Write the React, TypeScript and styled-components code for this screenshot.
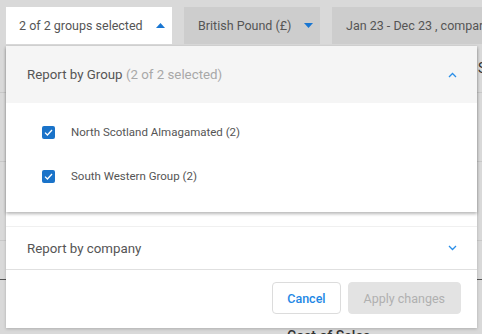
import { useState } from 'react'
import styled, { createGlobalStyle } from 'styled-components'

const GlobalStyle = createGlobalStyle`
  body {
    margin: 0;
    background: #d9d9d9;
    font-family: Roboto, 'Liberation Sans', sans-serif;
  }
  svg {
    flex-shrink: 0;
  }
`

const groups = [
  { id: 'nsa', name: 'North Scotland Almagamated (2)' },
  { id: 'swg', name: 'South Western Group (2)' },
]

const Caret = ({ up }: { up?: boolean }) => (
  <svg width='9' height='5' viewBox='0 0 9 5'>
    <path d={up ? 'M0 5 L4.5 0 L9 5 Z' : 'M0 0 L4.5 5 L9 0 Z'} fill='#1976d2' />
  </svg>
)

const Chevron = ({ up }: { up?: boolean }) => (
  <svg width='9' height='6' viewBox='0 0 9 6'>
    <path
      d={up ? 'M1 5 L4.5 1.5 L8 5' : 'M1 1 L4.5 4.5 L8 1'}
      fill='none'
      stroke='#2a8ee8'
      strokeWidth='1.3'
    />
  </svg>
)

const Check = () => (
  <svg width='9' height='7' viewBox='0 0 9 7'>
    <path d='M1 3.6 L3.4 6 L8 1' fill='none' stroke='#fff' strokeWidth='1.3' />
  </svg>
)

const App = () => {
  const [checked, setChecked] = useState<Record<string, boolean>>({ nsa: true, swg: true })

  return (
    <Page>
      <GlobalStyle />
      <Toolbar>
        <FilterTab $active $width={166}>
          2 of 2 groups selected
          <Caret up />
        </FilterTab>
        <FilterTab $width={136}>
          British Pound (£)
          <Caret />
        </FilterTab>
        <FilterTab $width={170}>Jan 23 - Dec 23 , compared to Jan 22 - Dec 22</FilterTab>
      </Toolbar>

      {/* table behind the dropdown */}
      <Table>
        <TableRow $height={46}>
          <Cell>Sales</Cell>
        </TableRow>
        <TableRow $height={68} />
        <TableRow $height={78} />
        <TableRow $height={38} $dark />
        <TableRow $height={64}>
          <Cell $bold>Cost of Sales</Cell>
        </TableRow>
      </Table>

      <Dropdown>
        <OpenCard>
          <CardHeader $shaded>
            <Title>
              Report by Group <Muted>(2 of 2 selected)</Muted>
            </Title>
            <Chevron up />
          </CardHeader>
          <List>
            {groups.map((g) => (
              <Item key={g.id} onClick={() => setChecked({ ...checked, [g.id]: !checked[g.id] })}>
                <Box $on={checked[g.id]}>{checked[g.id] && <Check />}</Box>
                {g.name}
              </Item>
            ))}
          </List>
        </OpenCard>

        <ClosedCard>
          <CardHeader>
            <Title>Report by company</Title>
            <Chevron />
          </CardHeader>
        </ClosedCard>

        <Footer>
          <Button>Cancel</Button>
          <Button $disabled>Apply changes</Button>
        </Footer>
      </Dropdown>
    </Page>
  )
}

export default App

const Page = styled.div`
  position: relative;
  width: 482px;
  height: 334px;
  overflow: hidden;
  background: #d9d9d9;
`

const Toolbar = styled.div`
  display: flex;
  gap: 12px;
  padding: 7px 0 0 6px;
  white-space: nowrap;
`

const FilterTab = styled.div<{ $active?: boolean; $width: number }>`
  flex: 0 0 ${(p) => p.$width}px;
  height: 37px;
  display: flex;
  align-items: center;
  gap: 13px;
  padding: 0 13px 0 ${(p) => (p.$active ? 13 : 14)}px;
  box-sizing: border-box;
  background: ${(p) => (p.$active ? '#ffffff' : '#cdcdcd')};
  color: #555;
  font-size: 12.5px;
  overflow: hidden;
`

const Table = styled.div`
  margin-top: 2px;
`

const TableRow = styled.div<{ $height: number; $dark?: boolean }>`
  height: ${(p) => p.$height}px;
  border-bottom: 1px solid ${(p) => (p.$dark ? '#555' : '#c8c8c8')};
  display: flex;
  align-items: flex-end;
`

const Cell = styled.div<{ $bold?: boolean }>`
  margin-left: ${(p) => (p.$bold ? 287 : 478)}px;
  font-size: 14px;
  font-weight: ${(p) => (p.$bold ? 500 : 400)};
  color: #333;
  padding-bottom: ${(p) => (p.$bold ? 0 : 16)}px;
  white-space: nowrap;
`

const Dropdown = styled.div`
  position: absolute;
  top: 46px;
  left: 6px;
  width: 471px;
  height: 282px;
  background: #fff;
  box-shadow: 0 1px 3px rgba(0, 0, 0, 0.2);
  display: flex;
  flex-direction: column;
`

const OpenCard = styled.div`
  background: #fff;
  box-shadow: 0 2px 3px rgba(0, 0, 0, 0.28);
  position: relative;
  z-index: 1;
`

const CardHeader = styled.div<{ $shaded?: boolean }>`
  height: ${(p) => (p.$shaded ? 57 : 42)}px;
  display: flex;
  align-items: center;
  justify-content: space-between;
  padding: 0 20px 0 21px;
  background: ${(p) => (p.$shaded ? '#f5f5f5' : '#fff')};
`

const Title = styled.div`
  font-size: 13.3px;
  color: #555;
`

const Muted = styled.span`
  color: #a8a8a8;
`

const List = styled.div`
  padding: 7px 0 14px 36px;
`

const Item = styled.div`
  height: 44px;
  display: flex;
  align-items: center;
  gap: 16px;
  font-size: 11.5px;
  color: #555;
  cursor: pointer;
`

const Box = styled.div<{ $on?: boolean }>`
  width: 13px;
  height: 13px;
  border-radius: 2px;
  display: flex;
  align-items: center;
  justify-content: center;
  background: ${(p) => (p.$on ? '#1a73c9' : '#fff')};
  border: ${(p) => (p.$on ? 'none' : '1px solid #999')};
`

const ClosedCard = styled.div`
  margin-top: 14px;
  border-top: 1px solid #f0f0f0;
  border-bottom: 1px solid #e0e0e0;
`

const Footer = styled.div`
  display: flex;
  justify-content: flex-end;
  gap: 7px;
  padding: 12px 16px 0 0;
`

const Button = styled.button<{ $disabled?: boolean }>`
  height: 32px;
  padding: 0 ${(p) => (p.$disabled ? 15 : 14)}px;
  border-radius: 4px;
  font-family: Roboto, 'Liberation Sans', sans-serif;
  font-size: 12.5px;
  font-weight: ${(p) => (p.$disabled ? 400 : 500)};
  color: ${(p) => (p.$disabled ? '#b0b0b0' : '#1e88e5')};
  background: ${(p) => (p.$disabled ? '#e3e3e3' : '#fff')};
  border: 1px solid ${(p) => (p.$disabled ? '#e3e3e3' : '#dcdcdc')};
`
